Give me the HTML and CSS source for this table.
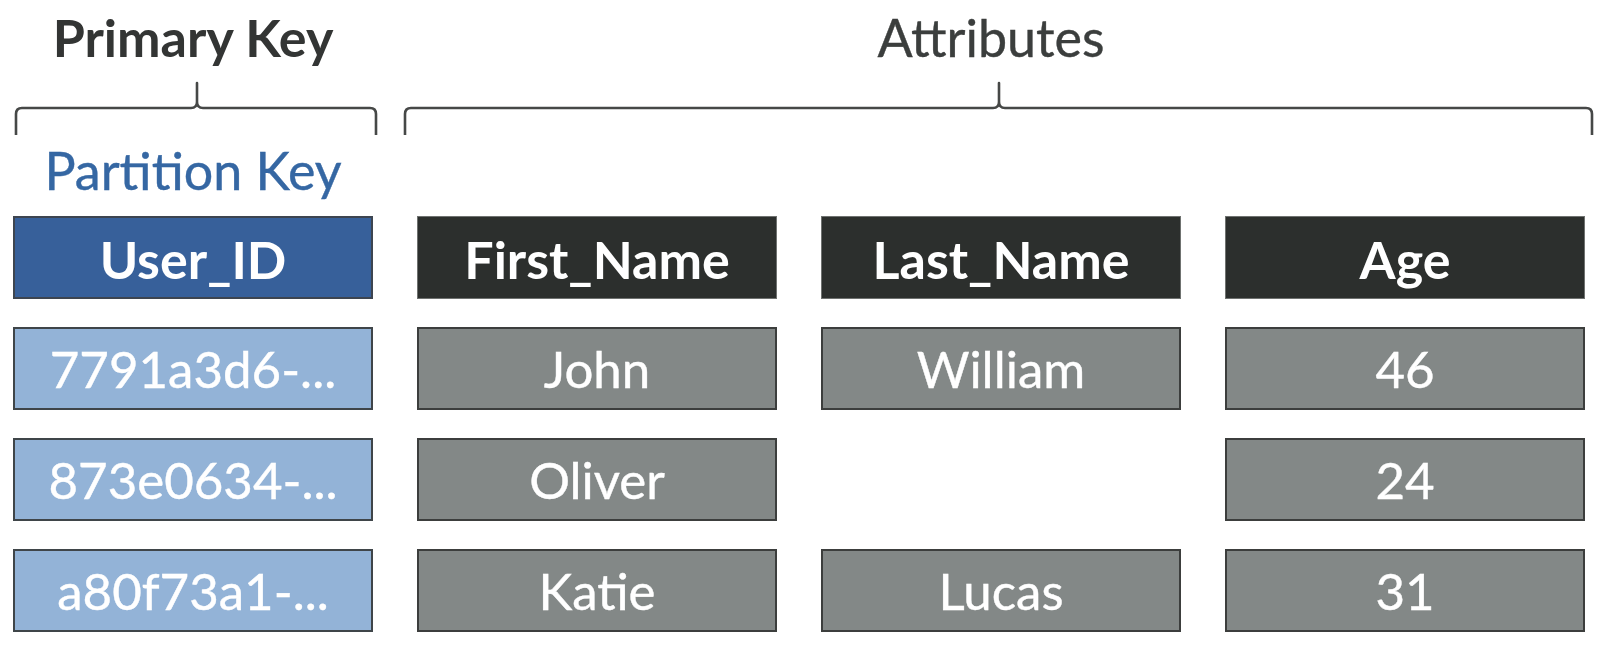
FILE: index.html
```html
<!DOCTYPE html>
<html>
<head>
<meta charset="utf-8">
<link rel="stylesheet" href="styles.css">
</head>
<body>
<div class="page">
  <div class="titles">
    <div class="title title-pk">Primary Key</div>
    <div class="title title-attr">Attributes</div>
  </div>
  <svg class="braces" width="1608" height="60" viewBox="0 0 1608 60">
    <path d="M16,57 V36 Q16,30 22,30 H191 Q197,30 197,24 V5 V24 Q197,30 203,30 H370 Q376,30 376,36 V57" />
    <path d="M405,57 V36 Q405,30 411,30 H993 Q999,30 999,24 V5 V24 Q999,30 1005,30 H1586 Q1592,30 1592,36 V57" />
  </svg>
  <div class="subtitles">
    <div class="subtitle">Partition Key</div>
  </div>
  <div class="table">
    <div class="cell head key">User_ID</div>
    <div class="cell head">First_Name</div>
    <div class="cell head">Last_Name</div>
    <div class="cell head">Age</div>

    <div class="cell val key">7791a3d6-...</div>
    <div class="cell val">John</div>
    <div class="cell val">William</div>
    <div class="cell val">46</div>

    <div class="cell val key">873e0634-...</div>
    <div class="cell val">Oliver</div>
    <div class="cell empty"></div>
    <div class="cell val">24</div>

    <div class="cell val key">a80f73a1-...</div>
    <div class="cell val">Katie</div>
    <div class="cell val">Lucas</div>
    <div class="cell val">31</div>
  </div>
</div>
</body>
</html>
```
FILE: styles.css
```css
html, body {
  margin: 0;
  padding: 0;
  background: #ffffff;
}

body {
  font-family: "Lato", "Liberation Sans", sans-serif;
  width: 1608px;
  height: 650px;
  overflow: hidden;
}

.page {
  width: 1608px;
}

.titles {
  display: grid;
  grid-template-columns: 360px 1168px;
  column-gap: 44px;
  padding: 8px 0 0 13px;
}

.title {
  font-size: 52px;
  line-height: 58px;
  text-align: center;
  white-space: nowrap;
}

.title-pk {
  font-weight: 700;
  color: #333534;
}

.title-attr {
  font-weight: 400;
  color: #3b3e3d;
  padding-right: 20px;
  -webkit-text-stroke: 0.4px #3b3e3d;
}

.braces {
  display: block;
  margin-top: 12px;
}

.braces path {
  fill: none;
  stroke: #464847;
  stroke-width: 2.6;
  stroke-linejoin: round;
  stroke-linecap: butt;
}

.subtitles {
  display: grid;
  grid-template-columns: 360px;
  padding-left: 13px;
  margin-top: 3px;
}

.subtitle {
  font-size: 52px;
  line-height: 58px;
  text-align: center;
  color: #3567a3;
  -webkit-text-stroke: 0.4px #3567a3;
}

.table {
  display: grid;
  grid-template-columns: repeat(4, 360px);
  grid-auto-rows: 83px;
  column-gap: 44px;
  row-gap: 28px;
  padding-left: 13px;
  margin-top: 17px;
}

.cell {
  box-sizing: border-box;
  display: flex;
  align-items: center;
  justify-content: center;
  color: #ffffff;
  font-size: 51px;
  white-space: nowrap;
}

.head {
  font-size: 52px;
  font-weight: 700;
  background: #2c2f2d;
  border: 1px solid #6f7270;
  padding-top: 2px;
}

.head.key {
  background: #37609a;
  border: 2px solid #3d4550;
}

.val {
  font-weight: 400;
  background: #838887;
  border: 2px solid #3c3e3d;
  -webkit-text-stroke: 0.4px #ffffff;
}

.val.key {
  background: #93b3d7;
  border: 2px solid #3f4549;
}

.empty {
  background: transparent;
  border: none;
  -webkit-text-stroke: 0;
}
```
